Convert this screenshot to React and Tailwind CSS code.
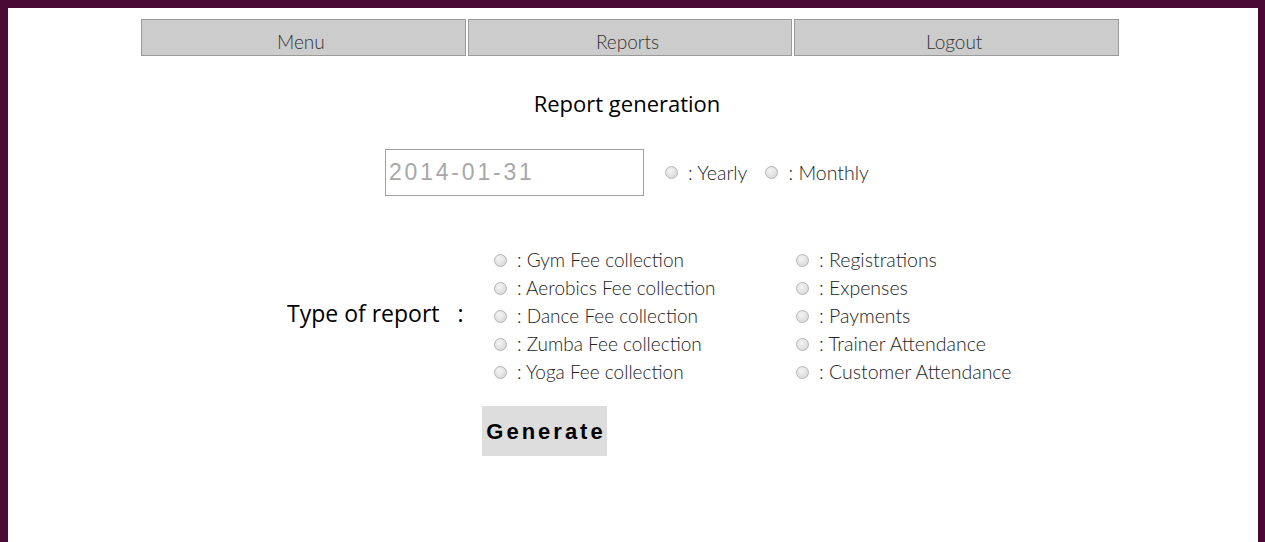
import { useState } from "react";

const leftTypes = [
  "Gym Fee collection",
  "Aerobics Fee collection",
  "Dance Fee collection",
  "Zumba Fee collection",
  "Yoga Fee collection",
];

const rightTypes = [
  "Registrations",
  "Expenses",
  "Payments",
  "Trainer Attendance",
  "Customer Attendance",
];

function Radio({ checked }) {
  return (
    <span className="inline-flex h-[13px] w-[13px] shrink-0 items-center justify-center rounded-full border border-[#b5b5b5] bg-[radial-gradient(circle_at_40%_35%,#f4f4f4,#d2d2d2)]">
      {checked && <span className="h-[5px] w-[5px] rounded-full bg-[#333]" />}
    </span>
  );
}

function RadioLabel({ label, checked, onClick, className = "" }) {
  return (
    <label className={`flex cursor-pointer items-center gap-[10px] ${className}`} onClick={onClick}>
      <Radio checked={checked} />
      <span>: {label}</span>
    </label>
  );
}

export default function App() {
  const [period, setPeriod] = useState("");
  const [type, setType] = useState("");

  return (
    <div className="h-[542px] bg-[#480a34] pl-[8px] pr-[7px] pt-[8px] font-['Lato','Open_Sans',sans-serif] text-[#222]">
      <div className="h-full bg-white">
        {/* Nav */}
        <nav className="ml-[133px] flex w-[978px] gap-[2px] pt-[11px]">
          {["Menu", "Reports", "Logout"].map((item) => (
            <button
              key={item}
              className="h-[37px] w-[325px] border border-[#9a9a9a] bg-[#cccccc] pr-[5px] pt-[9px] text-[19px] font-light leading-[26px] text-[#333]"
            >
              {item}
            </button>
          ))}
        </nav>

        <h1 className="ml-[133px] mt-[32px] w-[972px] text-center font-['Open_Sans',sans-serif] text-[22px] leading-[30px] text-black">
          Report generation
        </h1>

        {/* Date + period */}
        <div className="ml-[377px] mt-[31px] flex items-center">
          <input
            defaultValue="2014-01-31"
            className="h-[47px] w-[259px] border border-[#a0a0a0] px-[3px] font-['Liberation_Sans',Arial,sans-serif] text-[23px] tracking-[2.8px] text-[#a8a8a8] outline-none"
          />
          <RadioLabel
            label="Yearly"
            checked={period === "y"}
            onClick={() => setPeriod("y")}
            className="ml-[21px] text-[19.5px] font-light"
          />
          <RadioLabel
            label="Monthly"
            checked={period === "m"}
            onClick={() => setPeriod("m")}
            className="ml-[18px] text-[19.5px] font-light"
          />
        </div>

        {/* Type of report */}
        <div className="mt-[50px] flex items-center">
          <div className="ml-[279px] flex w-[207px] -translate-y-[3px] items-center font-['Open_Sans',sans-serif] text-[23px] text-black">
            <span>Type of report</span>
            <span className="ml-[18px]">:</span>
          </div>
          <div className="flex flex-col">
            {leftTypes.map((t) => (
              <RadioLabel
                key={t}
                label={t}
                checked={type === t}
                onClick={() => setType(t)}
                className="h-[28px] w-[302px] text-[19px] font-light"
              />
            ))}
          </div>
          <div className="flex flex-col">
            {rightTypes.map((t) => (
              <RadioLabel
                key={t}
                label={t}
                checked={type === t}
                onClick={() => setType(t)}
                className="h-[28px] text-[19.5px] font-light"
              />
            ))}
          </div>
        </div>

        <button className="ml-[474px] mt-[20px] h-[50px] w-[125px] bg-[#dddddd] pl-[3px] font-['Liberation_Sans',Arial,sans-serif] text-[22px] font-bold tracking-[3px] text-black">
          Generate
        </button>
      </div>
    </div>
  );
}
